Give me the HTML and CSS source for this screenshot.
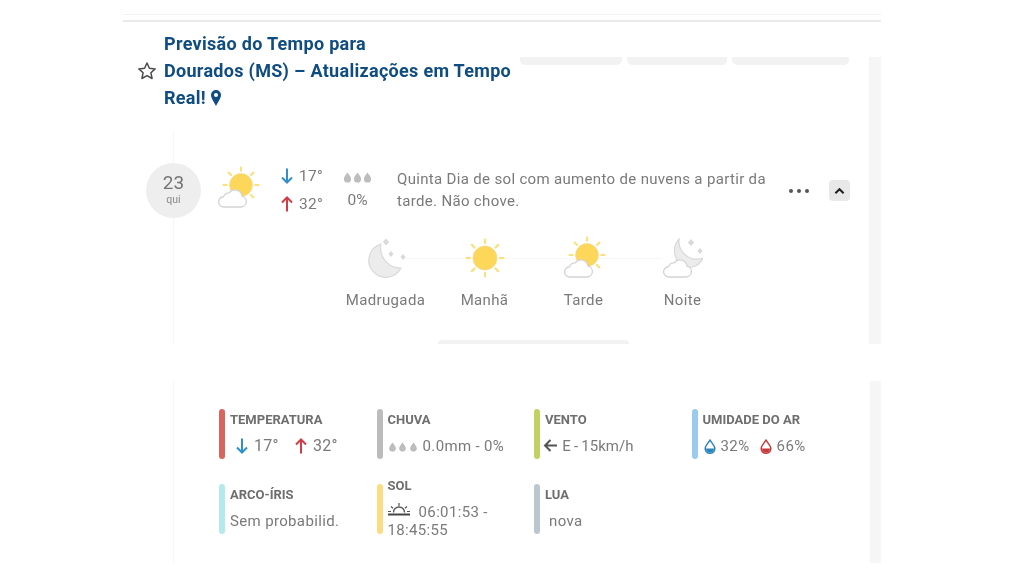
FILE: index.html
```html
<!DOCTYPE html>
<html lang="pt-BR">
<head>
<meta charset="utf-8">
<title>Previsão do Tempo para Dourados (MS)</title>
<link rel="stylesheet" href="styles.css">
</head>
<body>
<svg class="defs" width="0" height="0" aria-hidden="true">
  <defs>
    <symbol id="sun" viewBox="0 0 40 40">
      <g stroke="#fbe07f" stroke-width="2.200" stroke-linecap="round">
        <path d="M20 1.500v3.500M20 35v3.500M1.500 20H5M35 20h3.500M6.900 6.900l2.600 2.600M30.500 30.500l2.600 2.600M6.900 33.100l2.600-2.600M30.500 9.500l2.600-2.600"/>
      </g>
      <circle cx="20" cy="20" r="12" fill="#fdd75a" stroke="#f6d88a" stroke-width=".8"/>
    </symbol>
    <symbol id="cloud" viewBox="2 2.500 27.500 17">
      <path d="M7.500 18.800h15.500a5 5 0 0 0 1-9.900 6.500 6.500 0 0 0-11.800-3A5.500 5.500 0 0 0 7 9.400 4.700 4.700 0 0 0 7.500 18.800z" fill="#fff" stroke="#d4d4d4" stroke-width="1.200"/>
    </symbol>
    <symbol id="moon" viewBox="0 0 40 40">
      <path d="M15 6A17 17 0 1 0 35 30 20 20 0 0 1 15 6z" fill="#ececec" stroke="#d9d9d9" stroke-width="1.200"/>
      <path d="M20 .5l3.200 3.500-3.200 3.500-3.200-3.500zM25 13l2.500 3-2.500 3-2.500-3zM37 16l2.500 3-2.500 3-2.500-3z" fill="#d9d9d9"/>
    </symbol>
    <symbol id="moon-night" viewBox="0 0 40 40">
      <path d="M16 1A15 16.500 0 1 0 40 20 18 18 0 0 1 16 1z" fill="#ececec" stroke="#d9d9d9" stroke-width="1.200"/>
      <path d="M28 1l3.200 3.500L28 8l-3.200-3.500zM37 10l2.500 3-2.500 3-2.500-3z" fill="#d9d9d9"/>
    </symbol>
    <symbol id="drop" viewBox="0 0 10 12">
      <path d="M5 .5C6.800 3 9 5.200 9 7.600a4 4 0 0 1-8 0C1 5.200 3.200 3 5 .5z" fill="currentColor"/>
    </symbol>
    <symbol id="hum" viewBox="0 0 12 15">
      <path d="M6 1.200C7.800 4 10.800 6.800 10.800 9.500a4.800 4.800 0 0 1-9.600 0C1.200 6.800 4.200 4 6 1.200z" fill="none" stroke="currentColor" stroke-width="1.500"/>
      <path d="M2 9.500h8a4 4 0 0 1-8 0z" fill="currentColor"/>
    </symbol>
    <symbol id="down" viewBox="0 0 12 16">
      <path d="M6 .5v14M1 9.500l5 5 5-5" fill="none" stroke="currentColor" stroke-width="2"/>
    </symbol>
    <symbol id="up" viewBox="0 0 12 16">
      <path d="M6 15.500v-14M1 6.500l5-5 5 5" fill="none" stroke="currentColor" stroke-width="2"/>
    </symbol>
  </defs>
</svg>

<div class="page">
  <div class="rule rule-light"></div>
  <div class="rule"></div>

  <section class="upper">
    <div class="upper-main">
      <header class="head">
        <svg class="star" viewBox="0 0 20 20"><path d="M10 2l2.400 5.300 5.800.6-4.300 3.900 1.200 5.700-5.100-2.900-5.100 2.900 1.200-5.700L1.800 7.900l5.800-.6z" fill="none" stroke="#4b4b4b" stroke-width="1.500" stroke-linejoin="round"/></svg>
        <h1 class="title">Previsão do Tempo para<br>Dourados (MS) – Atualizações em Tempo<br>Real! <svg class="pin" viewBox="0 0 10 16"><path fill-rule="evenodd" d="M5 0a5 5 0 0 1 5 5c0 3-3 7-5 11C3 12 0 8 0 5a5 5 0 0 1 5-5zm0 3a2 2 0 1 0 0 4 2 2 0 0 0 0-4z" fill="#0f4c81"/></svg></h1>
        <div class="tabs">
          <span class="tab tab-a"></span>
          <span class="tab tab-b"></span>
          <span class="tab tab-c"></span>
        </div>
      </header>

      <div class="forecast">
        <div class="day-row">
          <div class="day"><span class="day-num">23</span><span class="day-name">qui</span></div>
          <div class="wx"><svg class="wx-sun"><use href="#sun"/></svg><svg class="wx-cloud"><use href="#cloud"/></svg></div>
          <div class="temps">
            <div class="temp"><svg class="arrow blue"><use href="#down"/></svg>17°</div>
            <div class="temp"><svg class="arrow red"><use href="#up"/></svg>32°</div>
          </div>
          <div class="rain">
            <div class="drops"><svg class="drop"><use href="#drop"/></svg><svg class="drop"><use href="#drop"/></svg><svg class="drop"><use href="#drop"/></svg></div>
            <div>0%</div>
          </div>
          <p class="summary">Quinta Dia de sol com aumento de nuvens a partir da tarde. Não chove.</p>
          <div class="dots"><i></i><i></i><i></i></div>
          <button class="toggle" type="button" aria-label="Recolher"><svg viewBox="0 0 12 8"><path d="M1.500 6.500 6 2l4.500 4.500" fill="none" stroke="#222" stroke-width="2.200"/></svg></button>
        </div>

        <div class="periods">
          <div class="period"><div class="wx"><svg class="wx-full"><use href="#moon"/></svg></div><span>Madrugada</span></div>
          <div class="period"><div class="wx"><svg class="wx-full"><use href="#sun"/></svg></div><span>Manhã</span></div>
          <div class="period"><div class="wx"><svg class="wx-sun"><use href="#sun"/></svg><svg class="wx-cloud"><use href="#cloud"/></svg></div><span>Tarde</span></div>
          <div class="period"><div class="wx"><svg class="wx-full"><use href="#moon-night"/></svg><svg class="wx-cloud"><use href="#cloud"/></svg></div><span>Noite</span></div>
        </div>
        <div class="pill"></div>
      </div>
    </div>
    <aside class="strip strip-upper"></aside>
  </section>

  <section class="lower">
    <div class="stats">
      <div class="stat"><i class="bar c-red"></i><div class="stat-body"><div class="label">TEMPERATURA</div><div class="value value-temp"><svg class="arrow blue"><use href="#down"/></svg>17°<svg class="arrow red arrow-gap"><use href="#up"/></svg>32°</div></div></div>
      <div class="stat"><i class="bar c-gray"></i><div class="stat-body"><div class="label">CHUVA</div><div class="value"><span class="drops drops-sm"><svg class="drop"><use href="#drop"/></svg><svg class="drop"><use href="#drop"/></svg><svg class="drop"><use href="#drop"/></svg></span> 0.0mm - 0%</div></div></div>
      <div class="stat"><i class="bar c-green"></i><div class="stat-body"><div class="label">VENTO</div><div class="value value-wind"><svg class="wind" viewBox="0 0 14 13"><path d="M14 6.500H2M7.500 1 2 6.500 7.500 12" fill="none" stroke="#555" stroke-width="2"/></svg> E - 15km/h</div></div></div>
      <div class="stat"><i class="bar c-blue"></i><div class="stat-body"><div class="label">UMIDADE DO AR</div><div class="value"><svg class="hum blue-2"><use href="#hum"/></svg> 32% <svg class="hum hum-gap red-2"><use href="#hum"/></svg> 66%</div></div></div>
      <div class="stat"><i class="bar c-cyan"></i><div class="stat-body"><div class="label">ARCO-ÍRIS</div><div class="value">Sem probabilid.</div></div></div>
      <div class="stat"><i class="bar c-yellow"></i><div class="stat-body stat-tall"><div class="label">SOL</div><div class="value value-wrap"><svg class="sunrise" viewBox="0 0 22 14"><path d="M5.500 9.500a5.500 5.500 0 0 1 11 0" fill="none" stroke="#555" stroke-width="1.400"/><path d="M11 0v3M3 3.500l2 1.800M19 3.500l-2 1.800M0 8.500h3M19 8.500h3" stroke="#555" stroke-width="1.200"/><path d="M0 11.500h22" stroke="#444" stroke-width="2"/></svg> 06:01:53 - 18:45:55</div></div></div>
      <div class="stat"><i class="bar c-slate"></i><div class="stat-body"><div class="label">LUA</div><div class="value value-moon">nova</div></div></div>
    </div>
    <aside class="strip"></aside>
  </section>
</div>
</body>
</html>
```
FILE: styles.css
```css
* { box-sizing: border-box; }
html, body { margin: 0; padding: 0; background: #fff; }
body { font-family: Roboto, "Liberation Sans", sans-serif; color: #7a7a7a; height: 576px; overflow: hidden; }
.defs { display: block; height: 0; }
.page { width: 758px; margin-left: 123px; padding-top: 14px; filter: blur(.4px); }

.rule { height: 2px; background: #e8eaec; }
.rule-light { height: 1px; background: #f2f3f5; margin-bottom: 5px; }

.upper { display: flex; justify-content: space-between; height: 322px; }
.upper-main { width: 746px; }
.strip { width: 12px; background: #f6f6f6; }
.strip-upper { margin-top: 35px; }

.head { display: flex; height: 110px; position: relative; padding-left: 14px; }
.star { width: 20px; height: 20px; margin-top: 39px; flex: none; }
.title { margin: 8px 0 0 7px; width: 356px; flex: none; font-size: 18px; font-weight: 700; line-height: 27px; letter-spacing: .3px; color: #0f4c81; white-space: nowrap; }
.pin { width: 10px; height: 16px; vertical-align: -2px; }
.tabs { display: flex; gap: 5px; margin-top: 35px; align-items: flex-start; }
.tab { display: block; height: 8px; background: #f2f2f2; border-radius: 0 0 5px 5px; }
.tab-a { width: 102px; }
.tab-b { width: 100px; }
.tab-c { width: 117px; }

.forecast { margin-left: 50px; border-left: 1px solid #f6f6f6; height: 212px; display: flex; flex-direction: column; }

.day-row { display: flex; align-items: flex-start; padding-top: 31px; height: 135px; margin-left: -28px; }
.day { width: 55px; height: 55px; flex: none; border-radius: 50%; background: #eee; display: flex; flex-direction: column; align-items: center; justify-content: center; padding-bottom: 3px; }
.day-num { font-size: 19px; line-height: 22px; color: #757575; }
.day-name { font-size: 10.500px; line-height: 12px; color: #8a8a8a; }

.wx { position: relative; width: 40px; height: 40px; flex: none; }
.wx-full { display: block; width: 40px; height: 40px; }
.wx-sun { position: absolute; left: 4px; top: -2px; width: 38px; height: 38px; }
.wx-cloud { position: absolute; left: 0; bottom: 0; width: 30px; height: 19px; }
.day-row > .wx { margin: 5px 0 0 17px; }

.temps { margin: -1px 0 0 23px; width: 62px; flex: none; }
.temp { display: flex; align-items: center; height: 28px; font-size: 15.500px; letter-spacing: .3px; }
.arrow { width: 12px; height: 16px; flex: none; margin-right: 6px; }
.blue { color: #2f8fca; }
.red { color: #d23c44; }
.rain { width: 29px; margin-top: 2px; flex: none; text-align: center; font-size: 15.500px; line-height: 20px; }
.drops { display: flex; gap: 1px; justify-content: center; height: 25px; align-items: center; color: #bdbdbd; }
.drop { width: 9px; height: 11px; flex: none; }
.summary { margin: 5px 0 0 25px; width: 380px; flex: none; font-size: 15px; line-height: 22px; letter-spacing: .33px; color: #7a7a7a; }
.dots { display: flex; gap: 4px; margin: 26px 0 0 12px; flex: none; }
.dots i { display: block; width: 4px; height: 4px; border-radius: 50%; background: #555; }
.toggle { width: 21px; height: 21px; margin: 17px 0 0 20px; padding: 0; border: 0; border-radius: 4px; background: #e8e8e8; flex: none; display: flex; align-items: center; justify-content: center; }
.toggle svg { width: 11px; height: 8px; }

.periods { display: flex; margin-left: 162px; position: relative; }
.periods::before { content: ""; position: absolute; left: 69px; width: 257px; top: 20px; height: 1px; background: #f7f7f7; }
.period { width: 99px; display: flex; flex-direction: column; align-items: center; position: relative; font-size: 15px; letter-spacing: .35px; line-height: 20px; color: #7a7a7a; }
.period span { margin-top: 12px; }
.pill { width: 191px; height: 5px; margin: 30px 0 0 264px; background: #f2f2f2; border-radius: 5px 5px 0 0; }

.lower { display: flex; justify-content: space-between; height: 182px; margin-top: 37px; }
.stats { width: 746px; margin-left: 50px; border-left: 1px solid #f6f6f6; padding: 28px 0 0 45px; display: grid; grid-template-columns: repeat(4, 157.500px); grid-auto-rows: 50px; row-gap: 25px; }
.stat { display: flex; gap: 5px; height: 50px; }
.bar { display: block; width: 6px; height: 50px; border-radius: 3px; flex: none; }
.c-red { background: #d9655f; }
.c-gray { background: #bcbcbc; }
.c-green { background: #c3d163; }
.c-blue { background: #9bcbec; }
.c-cyan { background: #b5eaec; }
.c-yellow { background: #fbdc83; }
.c-slate { background: #bcc6d0; }

.stat-body { padding-top: 3px; min-width: 0; }
.stat-tall { margin-top: -9px; }
.label { font-size: 13px; line-height: 16px; font-weight: 700; color: #6e6e6e; white-space: nowrap; }
.value { margin-top: 9px; font-size: 15px; line-height: 18px; letter-spacing: .35px; white-space: nowrap; display: block; }
.value-temp { display: flex; align-items: center; padding-left: 6px; font-size: 16px; letter-spacing: .3px; }
.arrow-gap { margin-left: 16px; }
.value-moon { padding-left: 4px; }
.value-wrap { white-space: normal; width: 125px; }
.value-wind { word-spacing: -.5px; letter-spacing: 0; }
.drops-sm { display: inline-flex; height: auto; vertical-align: -1px; gap: 1.500px; margin-right: 1px; }
.drops-sm .drop { width: 9px; height: 10px; }
.wind { width: 14px; height: 13px; vertical-align: -1px; margin: 0 2px 0 -2px; }
.hum { width: 12px; height: 15px; vertical-align: -3px; margin: 0 1px; }
.hum-gap { margin-left: 6px; }
.blue-2 { color: #2a85b8; }
.red-2 { color: #c6383c; }
.sunrise { width: 22px; height: 14px; vertical-align: 0; margin-right: 5px; }
```
